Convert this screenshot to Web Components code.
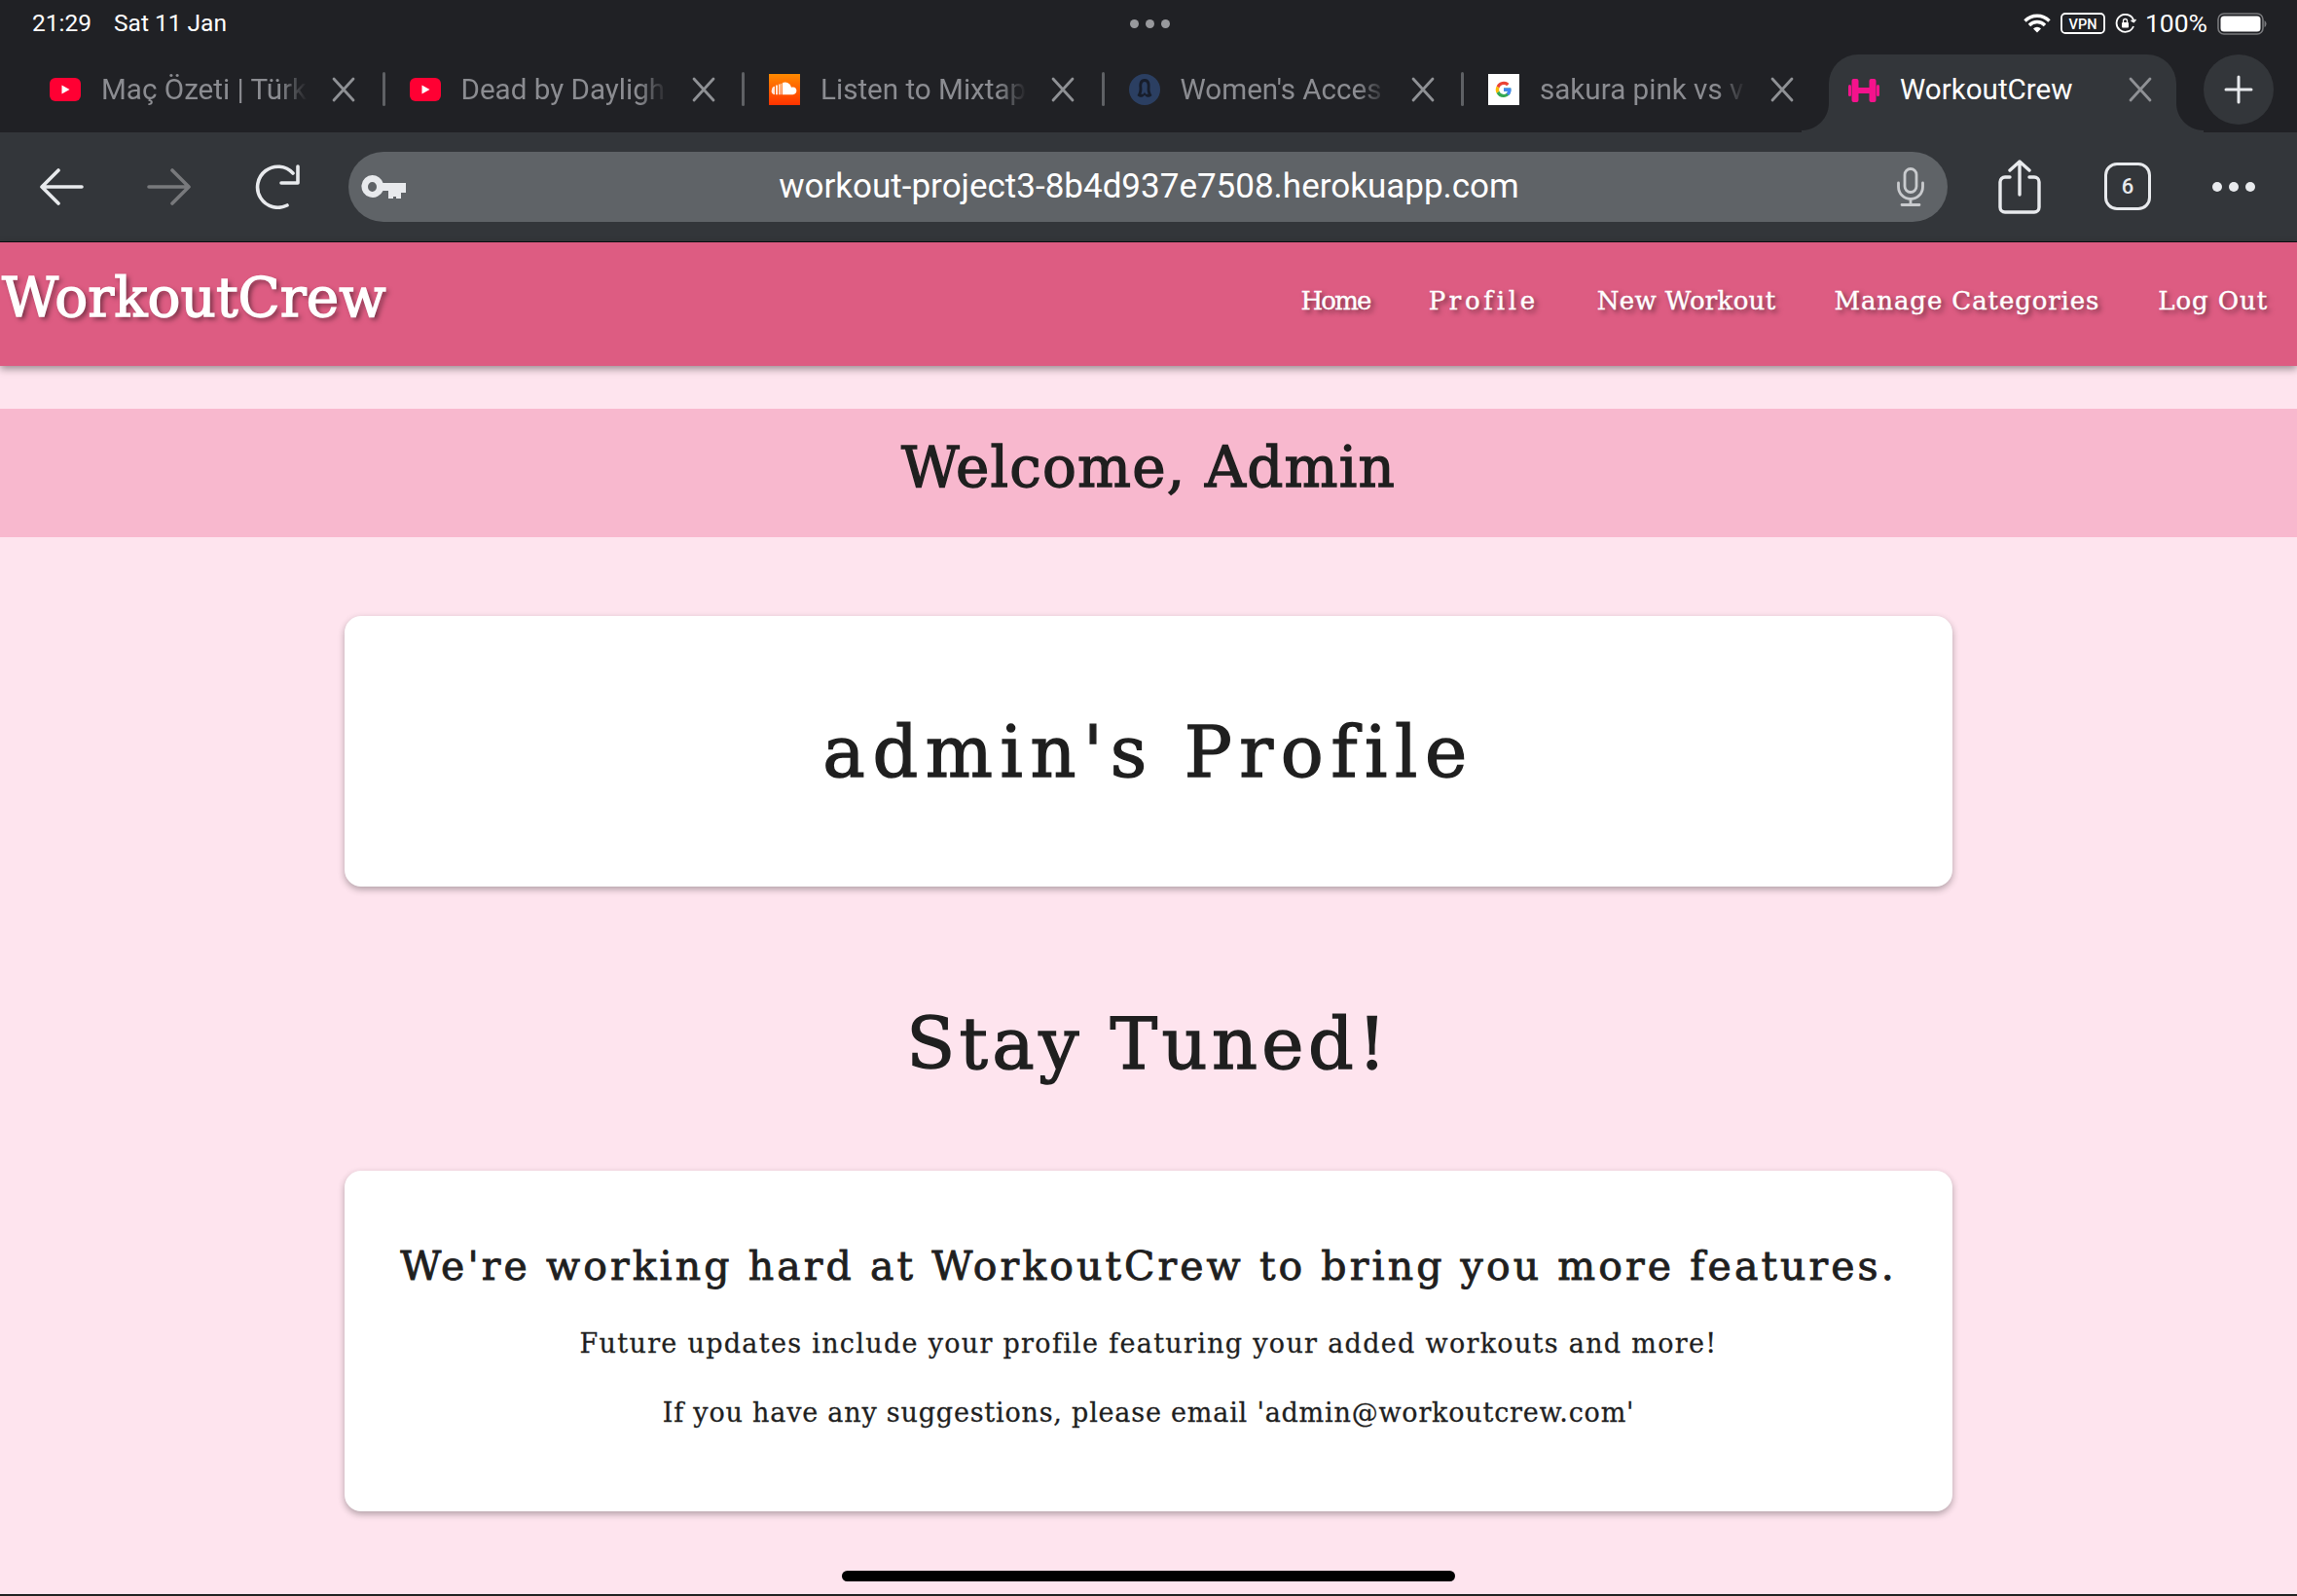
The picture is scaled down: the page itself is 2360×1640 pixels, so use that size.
<!DOCTYPE html>
<html lang="en"><head><meta charset="utf-8"><title>WorkoutCrew</title>
<style>
html,body{margin:0;padding:0;height:1640px;overflow:hidden;background:#fee4ee}
body{--type:"DejaVu Serif","Liberation Serif",serif;--ui:Roboto,"Liberation Sans",sans-serif;display:flex;flex-direction:column}
</style></head><body>
<status-bar></status-bar>
<tab-strip>
  <browser-tab label="Maç Özeti | Türk"><svg viewBox="0 0 32 24" width="32" height="24"><rect width="32" height="24" rx="6" fill="#ff0033"/><path d="M12.500 7.500v9l8-4.500z" fill="#fff"/></svg></browser-tab>
  <browser-tab label="Dead by Dayligh"><svg viewBox="0 0 32 24" width="32" height="24"><rect width="32" height="24" rx="6" fill="#ff0033"/><path d="M12.500 7.500v9l8-4.500z" fill="#fff"/></svg></browser-tab>
  <browser-tab label="Listen to Mixtap"><svg viewBox="0 0 32 32" width="32" height="32"><defs><linearGradient id="sc" x1="0" y1="0" x2="0" y2="1"><stop offset="0" stop-color="#ff8a00"/><stop offset="1" stop-color="#ff3300"/></linearGradient></defs><rect width="32" height="32" fill="url(#sc)"/><path d="M14 9a6.500 6.500 0 0 1 9 4.700 3.900 3.900 0 1 1 1.500 7.500H14z" fill="#fff"/><path d="M3 16a3.500 3.500 0 0 1 3-3.300v8.500A3.500 3.500 0 0 1 3 16zM7 11.500h2v9.700H7zM10 10.500h1.500v10.700H10zM12.300 9.800h1v11.400h-1z" fill="#fff" opacity=".85"/></svg></browser-tab>
  <browser-tab label="Women's Acces"><svg viewBox="0 0 32 32" width="32" height="32"><circle cx="16" cy="16" r="16" fill="#2b3f62"/><path d="M16 5c-5 0-6 4.500-5.500 9 .4 3.500-.8 6-2 8 2 2.500 6 2.500 7.500-.5 1.500 3 5.500 3 7.500.5-1.200-2-2.400-4.500-2-8C22 9.500 21 5 16 5zm0 3c2.500 0 3 3 2.700 6-.3 3 .2 5 1 6.500-1.500.8-3.100 0-3.700-2-.6 2-2.200 2.800-3.700 2 .8-1.500 1.300-3.500 1-6.500C13 11 13.500 8 16 8z" fill="#171d2a"/></svg></browser-tab>
  <browser-tab label="sakura pink vs v"><svg viewBox="0 0 32 32" width="32" height="32"><rect width="32" height="32" fill="#fff"/><path d="M23.300 14.600H16v3.100h4.200c-.5 2-2.200 3.200-4.200 3.200a4.900 4.900 0 0 1-4.600-3.300l-2.800 2.200A8 8 0 0 0 16 24c4.300 0 8-3 7.300-9.400z" fill="#34a853"/><path d="M16 11.100c1.200 0 2.300.4 3.100 1.200l2.400-2.400A8 8 0 0 0 8.700 12.500l2.700 2.100A4.900 4.900 0 0 1 16 11.100z" fill="#ea4335"/><path d="M8.700 12.500a8 8 0 0 0-.1 7.300l2.800-2.200a4.900 4.900 0 0 1 0-3z" fill="#fbbc05"/><path d="M23.300 14.600H16v3.100h4.200a3.800 3.800 0 0 1-1.600 2.300l2.600 2c2-1.800 2.800-4.500 2.100-7.400z" fill="#4285f4"/></svg></browser-tab>
  <browser-tab label="WorkoutCrew" active><svg viewBox="0 0 32 24" width="32" height="24" fill="#f5128c"><rect x="0" y="6" width="3" height="12" rx="1.500"/><rect x="3.500" y="0" width="7" height="24" rx="2"/><rect x="21.500" y="0" width="7" height="24" rx="2"/><rect x="29" y="6" width="3" height="12" rx="1.500"/><rect x="10" y="9" width="12" height="6"/></svg></browser-tab>
  <new-tab-button></new-tab-button>
</tab-strip>
<tool-bar url="workout-project3-8b4d937e7508.herokuapp.com" count="6"></tool-bar>
<site-nav brand="WorkoutCrew">
  <nav-link style="letter-spacing:-1.8px">Home</nav-link>
  <nav-link style="letter-spacing:3.700px">Profile</nav-link>
  <nav-link style="letter-spacing:.3px">New Workout</nav-link>
  <nav-link style="letter-spacing:.9px">Manage Categories</nav-link>
  <nav-link style="letter-spacing:.9px">Log Out</nav-link>
</site-nav>
<welcome-banner>Welcome, Admin</welcome-banner>
<content-card kind="hero">admin's Profile</content-card>
<section-title>Stay Tuned!</section-title>
<content-card kind="info">
  <card-lead>We're working hard at WorkoutCrew to bring you more features.</card-lead>
  <card-line style="letter-spacing:1.300px">Future updates include your profile featuring your added workouts and more!</card-line>
  <card-line style="letter-spacing:.8px">If you have any suggestions, please email 'admin@workoutcrew.com'</card-line>
</content-card>
<home-indicator></home-indicator>
<script>
function def(name, css, html){
  customElements.define(name, class extends HTMLElement{
    constructor(){super();this.attachShadow({mode:'open'});}
    connectedCallback(){
      const h = typeof html==='function'?html(this):html;
      this.shadowRoot.innerHTML='<style>'+css+'</style>'+h;
    }
  });
}
def('status-bar',`
 :host{display:grid;grid-template-columns:1fr auto 1fr;align-items:center;height:56px;background:#202125;color:#fff;font:400 24.500px/1 var(--ui);padding:0 31px 8px 33px;box-sizing:border-box;flex:none}
 .l{display:flex;gap:23px}.r{display:flex;align-items:center;justify-content:flex-end;gap:10px}
 .d{display:flex;gap:7px}.d i{width:9px;height:9px;border-radius:50%;background:#98999d;display:block}
 svg{display:block}
 .pct{font-size:26.500px;margin:0 0 0 -1px}
`,`<div class="l"><span>21:29</span><span>Sat 11 Jan</span></div>
<div class="d"><i></i><i></i><i></i></div>
<div class="r">
<svg width="28" height="20" viewBox="0 0 28 20" fill="none" stroke="#fff" stroke-width="3.400"><path d="M1.500 7.500a17.500 17.500 0 0 1 25 0"/><path d="M6 12a11 11 0 0 1 16 0"/><path d="M14 19.500l-4-4a5.500 5.500 0 0 1 8 0z" fill="#fff" stroke="none"/></svg>
<svg width="46" height="22" viewBox="0 0 46 22"><rect x="1" y="1" width="44" height="20" rx="4" fill="none" stroke="#fff" stroke-width="1.800"/><text x="23" y="16.500" text-anchor="middle" font-family="Roboto,sans-serif" font-size="14.500" font-weight="500" fill="#fff">VPN</text></svg>
<svg width="22" height="20" viewBox="0 0 22 20" fill="none" stroke="#fff" stroke-width="1.800"><path d="M19 13a9 9 0 1 1 .3-5.500"/><path d="M21.500 6l-2.200 2.500L16.500 7" stroke-width="1.500"/><rect x="7" y="9" width="7" height="5.500" rx="1" fill="#fff" stroke="none"/><path d="M8.500 9V7.500a2 2 0 0 1 4 0V9" stroke-width="1.300"/></svg>
<span class="pct">100%</span>
<svg width="51" height="23" viewBox="0 0 51 23"><rect x="1" y="1" width="46" height="21" rx="6" fill="none" stroke="#77787b" stroke-width="1.600"/><rect x="3.500" y="3.500" width="41" height="16" rx="3.500" fill="#fff"/><path d="M48.500 8a4 4 0 0 1 0 7z" fill="#77787b"/></svg>
</div>`);
def('tab-strip',`
 :host{display:flex;height:80px;background:#202125;padding-left:16px;box-sizing:border-box;flex:none;align-items:stretch}
`,`<slot></slot>`);
def('browser-tab',`
 :host{display:flex;align-items:flex-start;flex:none;width:369.500px;box-sizing:border-box;height:80px;position:relative;padding-left:35px;color:#8b8c91;font:400 29.600px/36px var(--ui)}
 .ic{width:32px;height:32px;flex:none;display:flex;align-items:center;justify-content:center;margin-top:20px;margin-right:21px}
 .ic ::slotted(svg){display:block}
 .t{width:212px;white-space:nowrap;overflow:hidden;margin-top:18px;-webkit-mask-image:linear-gradient(90deg,#000 86%,transparent 100%);mask-image:linear-gradient(90deg,#000 86%,transparent 100%)}
 .x{margin:23px 0 0 25px;flex:none;display:block}
 .sep{position:absolute;top:18px;width:3px;height:35px;background:#5f6165;border-radius:2px;right:-10px}
 :host([active]){width:357px;background:#33363a;border-radius:30px 30px 0 0;color:#fff;padding-left:20px;margin-left:15.500px}
 :host([active]) .ic{margin-right:21px;margin-top:21px}
 :host([active]) .t{width:225px;-webkit-mask-image:none;mask-image:none}
 :host([active]) .x{margin-left:10px}
 :host([active]) .sep,:host(:nth-child(5)) .sep{display:none}
 .fl,.fr{display:none;position:absolute;bottom:0;width:28px;height:30px}
 :host([active]) .fl{display:block;left:-28px;background:radial-gradient(circle at 0 0,transparent 27.500px,#33363a 28.500px)}
 :host([active]) .fr{display:block;right:-28px;background:radial-gradient(circle at 100% 0,transparent 27.500px,#33363a 28.500px)}
`,el=>`<span class="ic"><slot></slot></span><span class="t">${el.getAttribute('label')}</span>
<svg class="x" width="24" height="26" viewBox="0 0 24 26" fill="none" stroke="#8f9195" stroke-width="2.800" stroke-linecap="round"><path d="M2 2l20 22M22 2L2 24"/></svg>
<i class="sep"></i><i class="fl"></i><i class="fr"></i>`);
def('new-tab-button',`
 :host{display:flex;align-items:center;justify-content:center;width:72px;height:72px;border-radius:50%;background:#33363a;margin-left:28px;flex:none}
 svg{display:block}
`,`<svg width="30" height="30" viewBox="0 0 30 30" stroke="#e8eaed" stroke-width="3" stroke-linecap="round"><path d="M15 2v26M2 15h26"/></svg>`);
def('tool-bar',`
 :host{display:flex;align-items:center;height:113px;box-sizing:border-box;background:#33363a;border-bottom:1px solid #0d0e10;padding:0 40px 1px 41px;flex:none}
 svg{display:block;flex:none}
 .nav{display:flex;align-items:center}
 .addr{display:flex;align-items:center;width:1643px;height:72px;border-radius:36px;background:#5f6367;margin-left:49px;padding:0 24px 0 13px;box-sizing:border-box;color:#fff;font:400 35px/1 var(--ui)}
 .u{flex:1;text-align:center;margin-left:-5px;white-space:nowrap}
 .acts{display:flex;align-items:center;margin-left:52px}
 .cnt{width:48px;height:49px;border:3px solid #e8eaed;border-radius:13px;box-sizing:border-box;color:#e8eaed;display:flex;align-items:center;justify-content:center;font:500 22px/1 var(--ui);margin:0 0 0 65px}
 .dots{display:flex;gap:7px;margin-left:63px}.dots i{display:block;width:10px;height:10px;border-radius:50%;background:#e8eaed}
`,el=>`<div class="nav">
<svg width="45" height="38" viewBox="0 0 45 38" fill="none" stroke="#e8eaed" stroke-width="3.600" stroke-linecap="round" stroke-linejoin="round"><path d="M43 19H3M19 2L2 19l17 17"/></svg>
<svg style="margin-left:65px" width="45" height="38" viewBox="0 0 45 38" fill="none" stroke="#78797c" stroke-width="3.600" stroke-linecap="round" stroke-linejoin="round"><path d="M2 19h40M26 2l17 17-17 17"/></svg>
<svg style="margin-left:65px" width="48" height="46" viewBox="0 0 48 46" fill="none" stroke="#e8eaed" stroke-width="3.600" stroke-linecap="round" stroke-linejoin="round"><path d="M34 42A21 21 0 1 1 40 9"/><path d="M45 2v17H28"/></svg>
</div>
<div class="addr">
<svg width="46" height="24" viewBox="0 0 46 24" fill="#e8eaed"><path fill-rule="evenodd" d="M11.500 0a11.500 11.500 0 0 1 11 8H46v10h-5v6h-5v-2h-3v2h-5V16h-5.500A11.500 11.500 0 1 1 11.500 0zm0 7a4.500 5 0 1 0 0 10 4.500 5 0 0 0 0-10z"/></svg>
<span class="u">${el.getAttribute('url')}</span>
<svg width="28" height="40" viewBox="0 0 28 40" fill="none" stroke="#c9cbce" stroke-width="2.800" stroke-linecap="round"><rect x="8" y="1.500" width="12" height="24" rx="6"/><path d="M1.500 16v4a12.500 12.500 0 0 0 25 0v-4M14 32.500V38M5 38.500h18"/></svg>
</div>
<div class="acts">
<svg width="44" height="56" viewBox="0 0 44 56" fill="none" stroke="#e8eaed" stroke-width="3.400" stroke-linecap="round" stroke-linejoin="round"><path d="M12 18H7a5 5 0 0 0-5 5v26a5 5 0 0 0 5 5h30a5 5 0 0 0 5-5V23a5 5 0 0 0-5-5h-5"/><path d="M22 36V2M12 11L22 2l10 9"/></svg>
<span class="cnt">${el.getAttribute('count')}</span>
<span class="dots"><i></i><i></i><i></i></span>
</div>`);
def('site-nav',`
 :host{display:flex;justify-content:space-between;height:127px;background:#dd5c82;box-shadow:0 3px 8px rgba(0,0,0,.4);color:#fff;font-family:var(--type);padding:0 30px 0 0;flex:none;position:relative;box-sizing:border-box}
 .b{font-size:56.500px;-webkit-text-stroke:1.400px #fff;line-height:60px;margin:27px 0 0 2px;text-shadow:3px 3px 5px rgba(0,0,0,.5)}
 .links{display:flex;gap:60px;margin-top:42px;align-items:flex-start}
`,el=>`<div class="b">${el.getAttribute('brand')}</div><div class="links"><slot></slot></div>`);
def('nav-link',`
 :host{display:block;font-size:26px;line-height:36px;-webkit-text-stroke:.4px #fff;white-space:nowrap;text-shadow:3px 3px 5px rgba(0,0,0,.5)}
`,`<slot></slot>`);
def('welcome-banner',`
 :host{display:flex;justify-content:center;align-items:center;height:132px;box-sizing:border-box;padding-bottom:12px;background:#f8b8ce;margin-top:44px;font:400 58px/1 var(--type);letter-spacing:1.200px;-webkit-text-stroke:1.400px #1f1f1f;color:#1f1f1f;flex:none}
`,`<slot></slot>`);
def('content-card',`
 :host{display:flex;flex-direction:column;align-items:center;justify-content:center;width:1652px;box-sizing:border-box;background:#fff;border-radius:17px;box-shadow:0 3px 7px rgba(0,0,0,.3);color:#1f1f1f;font-family:var(--type);flex:none;align-self:center;text-align:center}
 :host([kind=hero]){height:278px;margin-top:81px;font-size:73px;letter-spacing:7.600px;-webkit-text-stroke:1.400px #1f1f1f}
 :host([kind=info]){height:350px;justify-content:flex-start;padding-top:73px}
`,`<slot></slot>`);
def('section-title',`
 :host{display:flex;justify-content:center;align-items:center;height:292px;box-sizing:border-box;padding-top:31px;font:400 73px/1 var(--type);letter-spacing:4.400px;-webkit-text-stroke:1.400px #1f1f1f;color:#1f1f1f;flex:none}
`,`<slot></slot>`);
def('card-lead',`
 :host{display:block;font-size:41px;line-height:50px;letter-spacing:3.100px;-webkit-text-stroke:.9px #1f1f1f;white-space:nowrap;margin-bottom:37px}
`,`<slot></slot>`);
def('card-line',`
 :host{display:block;font-size:27px;line-height:36px;-webkit-text-stroke:.3px #1f1f1f;white-space:nowrap;margin-bottom:35px}
`,`<slot></slot>`);
def('home-indicator',`
 :host{position:absolute;left:865px;top:1614px;width:630px;height:11px;border-radius:6px;background:#000}
 :host::after{content:"";position:absolute;left:-865px;top:24px;width:2360px;height:2px;background:#222}
`,``);
</script>
</body></html>
